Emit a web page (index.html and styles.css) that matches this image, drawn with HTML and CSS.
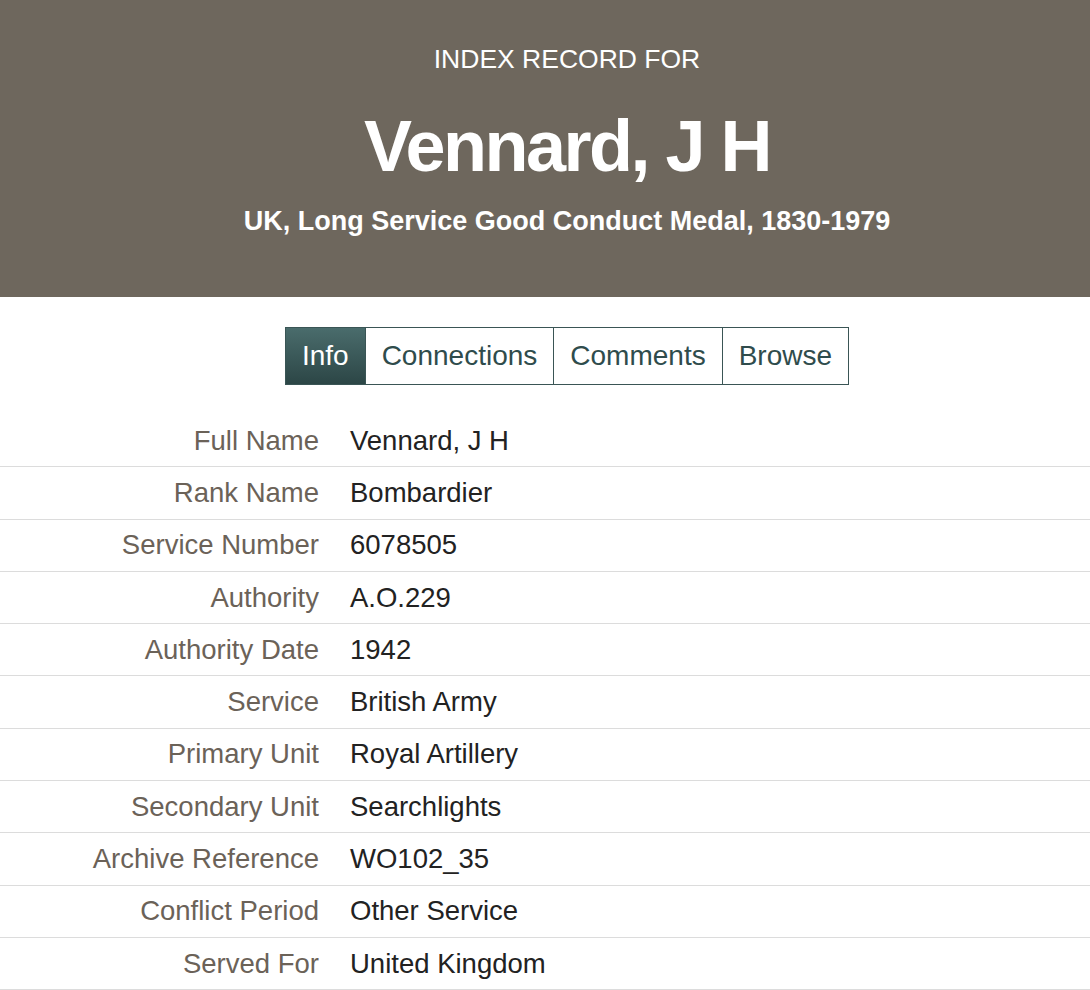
FILE: index.html
```html
<!DOCTYPE html>
<html lang="en">
<head>
  <meta charset="UTF-8">
  <title>Vennard, J H - Index Record</title>
  <link rel="stylesheet" href="styles.css">
</head>
<body>

  <header class="record-header">
    <p class="kicker">INDEX RECORD FOR</p>
    <h1>Vennard, J H</h1>
    <p class="collection">UK, Long Service Good Conduct Medal, 1830-1979</p>
  </header>

  <nav class="tabs">
    <a class="tab active" href="#">Info</a>
    <a class="tab" href="#">Connections</a>
    <a class="tab" href="#">Comments</a>
    <a class="tab" href="#">Browse</a>
  </nav>

  <dl class="record">
    <div class="row"><dt>Full Name</dt><dd>Vennard, J H</dd></div>
    <div class="row"><dt>Rank Name</dt><dd>Bombardier</dd></div>
    <div class="row"><dt>Service Number</dt><dd>6078505</dd></div>
    <div class="row"><dt>Authority</dt><dd>A.O.229</dd></div>
    <div class="row"><dt>Authority Date</dt><dd>1942</dd></div>
    <div class="row"><dt>Service</dt><dd>British Army</dd></div>
    <div class="row"><dt>Primary Unit</dt><dd>Royal Artillery</dd></div>
    <div class="row"><dt>Secondary Unit</dt><dd>Searchlights</dd></div>
    <div class="row"><dt>Archive Reference</dt><dd>WO102_35</dd></div>
    <div class="row"><dt>Conflict Period</dt><dd>Other Service</dd></div>
    <div class="row"><dt>Served For</dt><dd>United Kingdom</dd></div>
  </dl>

</body>
</html>
```

FILE: styles.css
```css
body {
  margin: 0;
  font-family: "Liberation Sans", Arial, sans-serif;
  background-color: #fff;
  color: #222;
}
.record-header {
  background-color: #6e675d;
  color: #fff;
  text-align: center;
  height: 297px;
  padding: 44px 0 0 44px;
  box-sizing: border-box;
}
.kicker {
  margin: 0;
  font-size: 26.5px;
  line-height: 30px;
}
.record-header h1 {
  margin: 32px 0 0;
  font-size: 72px;
  line-height: 80px;
  letter-spacing: -2.5px;
}
.collection {
  margin: 19px 0 0;
  font-size: 27px;
  font-weight: bold;
  line-height: 32px;
}
.tabs {
  display: flex;
  justify-content: center;
  margin-top: 30px;
  padding-left: 44px;
}
.tab {
  display: block;
  height: 56px;
  line-height: 56px;
  padding: 0 16px;
  font-size: 28px;
  color: #2f4c4c;
  text-decoration: none;
  border: 1px solid #3a5555;
  border-left: none;
}
.tab:first-child {
  border-left: 1px solid #3a5555;
}
.tab.active {
  color: #fff;
  background: linear-gradient(#4a6c6c, #2c4646);
}
.record {
  margin: 30px 0 0;
}
.row {
  display: grid;
  grid-template-columns: 319px 1fr;
  column-gap: 31px;
  height: 51.3px;
  align-items: center;
  border-bottom: 1px solid #dcdcdc;
  font-size: 27.5px;
}
.row dt {
  text-align: right;
  color: #6b6258;
}
.row dd {
  margin: 0;
  color: #222;
}
```
